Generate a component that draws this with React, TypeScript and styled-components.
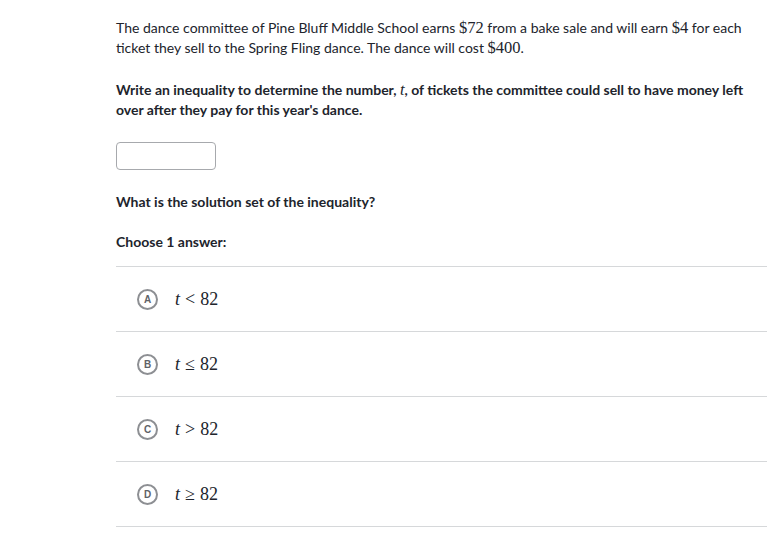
import styled, { createGlobalStyle } from 'styled-components';

const GlobalStyle = createGlobalStyle`
  html, body {
    margin: 0;
    padding: 0;
    background: #ffffff;
  }
  body {
    font-family: Lato, "Noto Sans", sans-serif;
    color: #21242c;
  }
`;

const Page = styled.div`
  padding: 18px 0 0 116px;
  width: 767px;
  box-sizing: border-box;
`;

const Paragraph = styled.p<{ $bold?: boolean }>`
  margin: 0 16px 0 0;
  font-size: 14px;
  line-height: 20px;
  font-weight: ${(p) => (p.$bold ? 700 : 400)};
`;

const Math = styled.span<{ $size?: number }>`
  font-family: "Liberation Serif", "DejaVu Serif", serif;
  font-size: ${(p) => p.$size ?? 16.5}px;
  font-weight: 400;
  line-height: 1;
`;

const Italic = styled.span`
  font-style: italic;
`;

const Op = styled.span`
  margin: 0 5px;
`;

const Section = styled.div<{ $gap: number }>`
  margin-top: ${(p) => p.$gap}px;
`;

const AnswerInput = styled.div`
  width: 98px;
  height: 26px;
  border: 1px solid #a7a9ad;
  border-radius: 4px;
  background: #fff;
`;

const Choices = styled.ul`
  list-style: none;
  margin: 14px 0 0 0;
  padding: 0;
  border-top: 1px solid #d6d8da;
`;

const Choice = styled.li`
  display: flex;
  align-items: center;
  height: 64px;
  border-bottom: 1px solid #d6d8da;
  padding-left: 21px;
  gap: 17px;
`;

const Letter = styled.span`
  box-sizing: border-box;
  flex: 0 0 21px;
  width: 21px;
  height: 21px;
  border: 2px solid #8d8f93;
  border-radius: 50%;
  display: flex;
  align-items: center;
  justify-content: center;
  font-family: "Liberation Sans", Arial, sans-serif;
  font-size: 10px;
  font-weight: 700;
  color: #5f6267;
`;

const choices = [
  { letter: 'A', op: '<' },
  { letter: 'B', op: '≤' },
  { letter: 'C', op: '>' },
  { letter: 'D', op: '≥' },
];

export default function App() {
  return (
    <>
      <GlobalStyle />
      <Page>
        <Paragraph>
          The dance committee of Pine Bluff Middle School earns <Math>$72</Math> from a bake sale and
          will earn <Math>$4</Math> for each ticket they sell to the Spring Fling dance. The dance will
          cost <Math>$400</Math>.
        </Paragraph>
        <Section $gap={22}>
          <Paragraph $bold>
            Write an inequality to determine the number, <Math><Italic>t</Italic></Math>, of tickets the
            committee could sell to have money left over after they pay for this year's dance.
          </Paragraph>
        </Section>
        <Section $gap={22}>
          <AnswerInput />
        </Section>
        <Section $gap={22}>
          <Paragraph $bold>What is the solution set of the inequality?</Paragraph>
        </Section>
        <Section $gap={20}>
          <Paragraph $bold>Choose 1 answer:</Paragraph>
        </Section>
        <Choices>
          {choices.map((c) => (
            <Choice key={c.letter}>
              <Letter>{c.letter}</Letter>
              <Math $size={18}>
                <Italic>t</Italic>
                <Op>{c.op}</Op>82
              </Math>
            </Choice>
          ))}
        </Choices>
      </Page>
    </>
  );
}
